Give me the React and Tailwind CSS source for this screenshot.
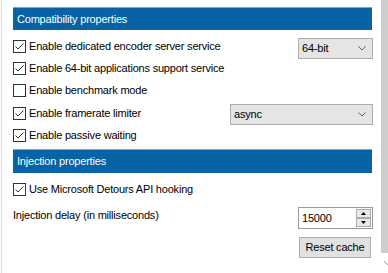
import React from "react";

function Check({ checked }) {
  return (
    <svg width="13" height="13" viewBox="0 0 13 13" className="shrink-0">
      <rect x="0.5" y="0.5" width="12" height="12" fill="#fff" stroke="#333" />
      {checked && (
        <polyline points="2.5,6.5 5,9 10.5,3.5" fill="none" stroke="#333" strokeWidth="1" />
      )}
    </svg>
  );
}

function CheckLabel({ checked, children }) {
  return (
    <label className="flex items-center gap-[3px]">
      <Check checked={checked} />
      <span>{children}</span>
    </label>
  );
}

function Combo({ value, className }) {
  return (
    <div
      className={`ml-auto self-start h-[21px] border border-[#adadad] bg-[#e5e5e5] flex items-center pl-[3px] pr-[6px] ${className}`}
    >
      <span className="flex-1">{value}</span>
      <svg width="8" height="5" viewBox="0 0 8 5">
        <polyline points="0.5,0.5 4,4 7.5,0.5" fill="none" stroke="#606060" strokeWidth="1" />
      </svg>
    </div>
  );
}

function Header({ children, className }) {
  return (
    <div
      className={`mr-px border-t border-[#9d9d9d] bg-[#0563a6] text-white pl-[4px] flex items-center ${className}`}
    >
      {children}
    </div>
  );
}

function Arrow({ up }) {
  return (
    <div className="flex-1 border border-[#acacac] bg-[#e9e9e9] flex items-center justify-center">
      <svg width="5" height="3" viewBox="0 0 5 3">
        <polygon points={up ? "0,3 5,3 2.5,0" : "0,0 5,0 2.5,3"} fill="#000" />
      </svg>
    </div>
  );
}

export default function App() {
  return (
    <div className="w-[388px] h-[273px] bg-white flex overflow-hidden text-[11px] tracking-[-0.2px] text-black font-['Liberation_Sans',Arial,sans-serif]">
      <div className="ml-px w-px bg-[#dcdcdc]" />

      <div className="flex-1 pl-[11px] pr-[8px] flex flex-col">
        <Header className="mt-[7px] h-[23px]">Compatibility properties</Header>

        <div className="mt-[5px] h-[22px] flex items-center">
          <CheckLabel checked>Enable dedicated encoder server service</CheckLabel>
          <Combo value="64-bit" className="mt-[3px] w-[75px]" />
        </div>
        <div className="h-[22px] flex items-center">
          <CheckLabel checked>Enable 64-bit applications support service</CheckLabel>
        </div>
        <div className="h-[23px] flex items-center">
          <CheckLabel>Enable benchmark mode</CheckLabel>
        </div>
        <div className="h-[22px] flex items-center">
          <CheckLabel checked>Enable framerate limiter</CheckLabel>
          <Combo value="async" className="mt-[2px] w-[143px]" />
        </div>
        <div className="h-[22px] flex items-center">
          <CheckLabel checked>Enable passive waiting</CheckLabel>
        </div>

        <Header className="mt-[3px] h-[24px]">Injection properties</Header>

        <div className="mt-[5px] h-[22px] flex items-center">
          <CheckLabel checked>Use Microsoft Detours API hooking</CheckLabel>
        </div>

        <div className="mt-[7px] flex items-start">
          <span className="mt-[2px] leading-[13px]">Injection delay (in milliseconds)</span>
          <div className="ml-auto w-[75px] h-[22px] border border-[#9a9a9a] bg-white flex items-center pl-[3px] pr-px">
            <span className="flex-1">15000</span>
            <div className="w-[15px] h-[18px] flex flex-col">
              <Arrow up />
              <Arrow />
            </div>
          </div>
        </div>

        <button className="mt-[8px] ml-auto mr-[2px] w-[72px] h-[21px] border border-[#adadad] bg-[#e1e1e1] flex items-center justify-center">
          Reset cache
        </button>
      </div>

      <div className="w-[7px] flex flex-col">
        <div className="h-[253px] bg-[#cdcdcd]" />
        <div className="mt-[8px] flex justify-end">
          <svg width="4" height="4" viewBox="0 0 4 4">
            <line x1="0" y1="0" x2="4" y2="4" stroke="#9a9a9a" strokeWidth="1" />
          </svg>
        </div>
      </div>
    </div>
  );
}
